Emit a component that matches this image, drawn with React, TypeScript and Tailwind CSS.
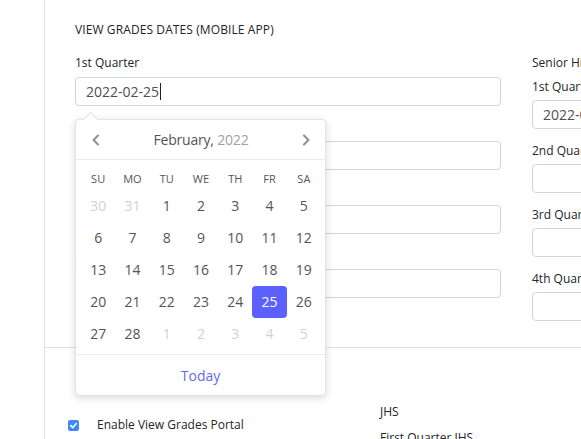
import React from "react";

const font = { fontFamily: '"Open Sans", "Noto Sans", sans-serif' };

const weeks: { d: number; muted?: boolean }[][] = [
  [{ d: 30, muted: true }, { d: 31, muted: true }, { d: 1 }, { d: 2 }, { d: 3 }, { d: 4 }, { d: 5 }],
  [{ d: 6 }, { d: 7 }, { d: 8 }, { d: 9 }, { d: 10 }, { d: 11 }, { d: 12 }],
  [{ d: 13 }, { d: 14 }, { d: 15 }, { d: 16 }, { d: 17 }, { d: 18 }, { d: 19 }],
  [{ d: 20 }, { d: 21 }, { d: 22 }, { d: 23 }, { d: 24 }, { d: 25 }, { d: 26 }],
  [{ d: 27 }, { d: 28 }, { d: 1, muted: true }, { d: 2, muted: true }, { d: 3, muted: true }, { d: 4, muted: true }, { d: 5, muted: true }],
];

function Chevron({ dir }: { dir: "left" | "right" }) {
  return (
    <svg width="10" height="12" viewBox="0 0 10 12" fill="none">
      <path
        d={dir === "left" ? "M7 1.5 L2.5 6 L7 10.5" : "M3 1.5 L7.5 6 L3 10.5"}
        stroke="#8f8f8f"
        strokeWidth="2"
        strokeLinecap="round"
        strokeLinejoin="round"
      />
    </svg>
  );
}

function Field({ label, value, last }: { label: string; value?: string; last?: boolean }) {
  return (
    <div className={last ? "" : "mb-[12px]"}>
      <div className="h-[18px] mb-[5px] text-[12px] leading-[18px] text-[#212529]">{label}</div>
      <div className="h-[29px] rounded-[4px] border border-[#ced4da] bg-white px-[10px] flex items-center text-[14px] text-[#495057]">
        {value}
        {value && <span className="ml-px h-[17px] w-px bg-[#222]" />}
      </div>
    </div>
  );
}

function RightField({ label, value, last }: { label: string; value?: string; last?: boolean }) {
  return (
    <div className={last ? "" : "mb-[13px]"}>
      <div className="h-[18px] mb-[4px] text-[12px] leading-[18px] text-[#212529] whitespace-nowrap">{label}</div>
      <div className="h-[29px] w-[426px] rounded-[4px] border border-[#ced4da] bg-white px-[10px] flex items-center text-[14px] text-[#495057]">
        {value}
      </div>
    </div>
  );
}

function DatePicker() {
  return (
    <div className="absolute left-[75px] top-[119px] w-[251px] rounded-[4px] border border-[#e3e3e3] bg-white shadow-[0_2px_8px_rgba(0,0,0,0.15)]">
      <div className="absolute -top-[6px] left-[9px] h-[11px] w-[11px] rotate-45 border-l border-t border-[#e3e3e3] bg-white" />
      <div className="relative flex h-[40px] items-center justify-between border-b border-[#ececec] pl-[15px] pr-[14px]">
        <Chevron dir="left" />
        <div className="text-[14px] text-[#555] tracking-[-0.2px]">
          February, <span className="text-[#a0a0a0]">2022</span>
        </div>
        <Chevron dir="right" />
      </div>
      <div className="pl-[5px] pr-[4px] pt-[8px] pb-[4px] border-b border-[#ececec]">
        <div className="grid grid-cols-7 h-[22px] items-center text-center text-[11px] leading-[14px] text-[#555]">
          {["SU", "MO", "TU", "WE", "TH", "FR", "SA"].map((n) => (
            <div key={n}>{n}</div>
          ))}
        </div>
        {weeks.map((w, i) => (
          <div key={i} className="grid grid-cols-7 h-[32px] text-center text-[14px] leading-[18px]">
            {w.map((c, j) => {
              const sel = !c.muted && c.d === 25;
              return (
                <div
                  key={j}
                  className={
                    "flex items-center justify-center rounded-[4px] " +
                    (sel ? "bg-[#5c60fe] text-white" : c.muted ? "text-[#d2d2d2]" : "text-[#555]")
                  }
                >
                  {c.d}
                </div>
              );
            })}
          </div>
        ))}
      </div>
      <div className="flex h-[40px] items-center justify-center text-[14px] text-[#6668f5]">Today</div>
    </div>
  );
}

export default function App() {
  return (
    <div className="relative h-[439px] w-[581px] overflow-hidden bg-white" style={font}>
      <div className="ml-[44px] h-full border-l border-[#dee2e6]">
        <div className="pl-[30px] pt-[21px]">
          <div className="h-[18px] text-[12px] leading-[18px] text-[#212529] tracking-[0.1px]">
            VIEW GRADES DATES (MOBILE APP)
          </div>
          <div className="mt-[15px] flex gap-[31px]">
            <div className="w-[426px] shrink-0">
              <Field label="1st Quarter" value="2022-02-25" />
              <Field label="2nd Quarter" />
              <Field label="3rd Quarter" />
              <Field label="4th Quarter" last />
            </div>
            <div className="shrink-0">
              <div className="h-[18px] mb-[6px] text-[12px] leading-[18px] text-[#212529] whitespace-nowrap">
                Senior High School
              </div>
              <RightField label="1st Quarter SHS" value="2022-02-25" />
              <RightField label="2nd Quarter SHS" />
              <RightField label="3rd Quarter SHS" />
              <RightField label="4th Quarter SHS" last />
            </div>
          </div>
        </div>
        <div className="mt-[26px] border-t border-[#dee2e6]" />
        <div className="flex pt-[55px]">
          <div className="ml-[23px] w-[312px] shrink-0 pt-[4px] flex items-center h-[40px]">
            <div className="flex h-[11px] w-[11px] items-center justify-center rounded-[2px] bg-[#3d8af7]">
              <svg width="9" height="9" viewBox="0 0 10 10" fill="none">
                <path d="M2 5.2 L4.2 7.3 L8.2 2.8" stroke="white" strokeWidth="1.8" strokeLinecap="round" strokeLinejoin="round" />
              </svg>
            </div>
            <span className="ml-[18px] text-[12px] leading-[18px] text-[#212529]">Enable View Grades Portal</span>
          </div>
          <div className="text-[12px] leading-[18px] text-[#212529]">
            <div>JHS</div>
            <div className="mt-[8px] whitespace-nowrap">First Quarter JHS</div>
          </div>
        </div>
      </div>
      <DatePicker />
    </div>
  );
}
